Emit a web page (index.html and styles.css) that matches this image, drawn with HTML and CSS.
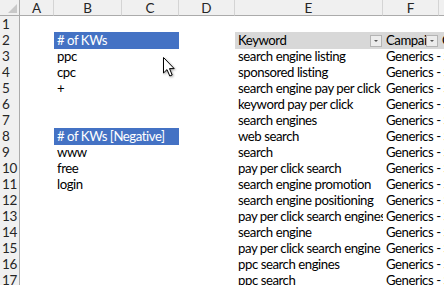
FILE: index.html
```html
<!DOCTYPE html>
<html lang="en">
<head>
  <meta charset="UTF-8" />
  <title>Keywords</title>
  <link rel="stylesheet" href="styles.css">
</head>
<body>

<div class="sheet">
  <div class="row head">
    <div class="corner"><span class="corner-tri"></span></div>
    <div class="colhead">A</div>
    <div class="colhead">B</div>
    <div class="colhead">C</div>
    <div class="colhead">D</div>
    <div class="colhead">E</div>
    <div class="colhead">F</div>
    <div class="colhead last"></div>
  </div>

  <div class="row">
    <div class="rownum">1</div>
    <div class="cell"></div><div class="cell"></div><div class="cell"></div><div class="cell"></div>
    <div class="cell"></div><div class="cell"></div><div class="cell"></div>
  </div>

  <div class="row">
    <div class="rownum">2</div>
    <div class="cell"></div>
    <div class="cell bc blue"># of KWs</div>
    <div class="cell"></div>
    <div class="cell th"><span class="th-text">Keyword</span><span class="filter"></span></div>
    <div class="cell th"><span class="th-text">Campaign</span><span class="filter"></span></div>
    <div class="cell th"><span class="th-text">Clicks</span></div>
  </div>

  <div class="row">
    <div class="rownum">3</div>
    <div class="cell"></div><div class="cell">ppc</div><div class="cell"></div><div class="cell"></div>
    <div class="cell kw">search engine listing</div><div class="cell camp">Generics - Search</div><div class="cell"></div>
  </div>

  <div class="row">
    <div class="rownum">4</div>
    <div class="cell"></div><div class="cell">cpc</div><div class="cell"></div><div class="cell"></div>
    <div class="cell kw">sponsored listing</div><div class="cell camp">Generics - Search</div><div class="cell"></div>
  </div>

  <div class="row">
    <div class="rownum">5</div>
    <div class="cell"></div><div class="cell">+</div><div class="cell"></div><div class="cell"></div>
    <div class="cell kw">search engine pay per click</div><div class="cell camp">Generics - Search</div><div class="cell"></div>
  </div>

  <div class="row">
    <div class="rownum">6</div>
    <div class="cell"></div><div class="cell"></div><div class="cell"></div><div class="cell"></div>
    <div class="cell kw">keyword pay per click</div><div class="cell camp">Generics - Search</div><div class="cell"></div>
  </div>

  <div class="row">
    <div class="rownum">7</div>
    <div class="cell"></div><div class="cell"></div><div class="cell"></div><div class="cell"></div>
    <div class="cell kw">search engines</div><div class="cell camp">Generics - Search</div><div class="cell"></div>
  </div>

  <div class="row">
    <div class="rownum">8</div>
    <div class="cell"></div>
    <div class="cell bc blue"># of KWs [Negative]</div>
    <div class="cell"></div>
    <div class="cell kw">web search</div><div class="cell camp">Generics - Search</div><div class="cell"></div>
  </div>

  <div class="row">
    <div class="rownum">9</div>
    <div class="cell"></div><div class="cell">www</div><div class="cell"></div><div class="cell"></div>
    <div class="cell kw">search</div><div class="cell camp">Generics - Search</div><div class="cell"></div>
  </div>

  <div class="row">
    <div class="rownum">10</div>
    <div class="cell"></div><div class="cell">free</div><div class="cell"></div><div class="cell"></div>
    <div class="cell kw">pay per click search</div><div class="cell camp">Generics - Search</div><div class="cell"></div>
  </div>

  <div class="row">
    <div class="rownum">11</div>
    <div class="cell"></div><div class="cell">login</div><div class="cell"></div><div class="cell"></div>
    <div class="cell kw">search engine promotion</div><div class="cell camp">Generics - Search</div><div class="cell"></div>
  </div>

  <div class="row">
    <div class="rownum">12</div>
    <div class="cell"></div><div class="cell"></div><div class="cell"></div><div class="cell"></div>
    <div class="cell kw">search engine positioning</div><div class="cell camp">Generics - Search</div><div class="cell"></div>
  </div>

  <div class="row">
    <div class="rownum">13</div>
    <div class="cell"></div><div class="cell"></div><div class="cell"></div><div class="cell"></div>
    <div class="cell kw">pay per click search engines</div><div class="cell camp">Generics - Search</div><div class="cell"></div>
  </div>

  <div class="row">
    <div class="rownum">14</div>
    <div class="cell"></div><div class="cell"></div><div class="cell"></div><div class="cell"></div>
    <div class="cell kw">search engine</div><div class="cell camp">Generics - Search</div><div class="cell"></div>
  </div>

  <div class="row">
    <div class="rownum">15</div>
    <div class="cell"></div><div class="cell"></div><div class="cell"></div><div class="cell"></div>
    <div class="cell kw">pay per click search engine</div><div class="cell camp">Generics - Search</div><div class="cell"></div>
  </div>

  <div class="row">
    <div class="rownum">16</div>
    <div class="cell"></div><div class="cell"></div><div class="cell"></div><div class="cell"></div>
    <div class="cell kw">ppc search engines</div><div class="cell camp">Generics - Search</div><div class="cell"></div>
  </div>

  <div class="row">
    <div class="rownum">17</div>
    <div class="cell"></div><div class="cell"></div><div class="cell"></div><div class="cell"></div>
    <div class="cell kw">ppc search</div><div class="cell camp">Generics - Search</div><div class="cell"></div>
  </div>

  <svg class="cursor" width="14" height="22" viewBox="0 0 14 22">
    <path d="M1.5 1.5 L1.5 17 L5 13.6 L7.8 20 L10.2 19 L7.5 12.6 L12.2 12.6 Z" fill="#fff" stroke="#000" stroke-width="1" stroke-linejoin="miter"/>
  </svg>
</div>

</body>
</html>
```

FILE: styles.css
```css
html, body {
  margin: 0; padding: 0;
  background: #fff;
  overflow: hidden;
}

.sheet {
  position: relative;
  width: 444px;
  height: 285px;
  overflow: hidden;
  font-family: 'Lato', 'Liberation Sans', sans-serif;
  font-size: 13.2px;
  letter-spacing: -0.45px;
  color: #000;
}

.row {
  display: grid;
  grid-template-columns: 20px 34px 68px 57px 56px 148px 56px 1fr;
  height: 16px;
  line-height: 17px;
}

.row.head {
  background: #f0f0f0;
}

.corner, .colhead {
  box-sizing: border-box;
  border-right: 1px solid #d4d4d4;
  border-bottom: 1px solid #ababab;
  height: 16px;
}

.corner {
  position: relative;
  border-right-color: #ababab;
}

.corner-tri {
  position: absolute;
  right: 2px;
  bottom: 2px;
  width: 0; height: 0;
  border-left: 9px solid transparent;
  border-bottom: 9px solid #c8c8c8;
}

.colhead {
  text-align: center;
  color: #262626;
  font-size: 13.5px;
  letter-spacing: 0;
  line-height: 16px;
}

.colhead.last {
  border-right: none;
}

.rownum {
  box-sizing: border-box;
  background: #f0f0f0;
  border-right: 1px solid #ababab;
  border-bottom: 1px solid #d4d4d4;
  color: #262626;
  font-size: 13.5px;
  letter-spacing: -0.3px;
  line-height: 16px;
  padding-left: 2px;
}

.cell {
  padding-left: 3px;
  white-space: nowrap;
  min-width: 0;
}

.cell.kw {
  overflow: hidden;
}

.cell.camp {
  overflow: visible;
}

.cell.bc {
  grid-column: span 2;
}

.blue {
  background: #4472c4;
  color: #fff;
}

.th {
  display: flex;
  align-items: center;
  background: #d8d8d8;
  overflow: hidden;
}

.th-text {
  flex: 1;
  overflow: hidden;
  white-space: nowrap;
}

.filter {
  position: relative;
  box-sizing: border-box;
  flex-shrink: 0;
  width: 12px;
  height: 12px;
  margin-right: 1px;
  margin-left: -1px;
  background: #ececec;
  border: 1px solid #b4b4b4;
}

.filter::after {
  content: '';
  position: absolute;
  left: 3px;
  top: 4px;
  border-left: 2px solid transparent;
  border-right: 2px solid transparent;
  border-top: 2px solid #555;
}

.cursor {
  position: absolute;
  left: 162px;
  top: 56px;
  filter: drop-shadow(1px 1px 1px rgba(0,0,0,0.35));
}
```
